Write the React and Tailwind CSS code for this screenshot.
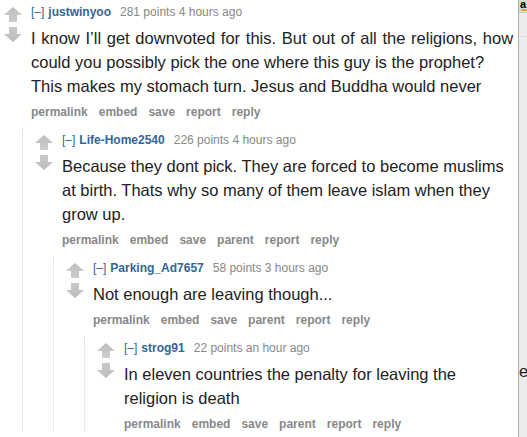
import React from "react";

const Arrow = ({ down }) => (
  <svg width="18" height="15" viewBox="0 0 18 15" className="block">
    <defs>
      <linearGradient id={down ? "gd" : "gu"} x1="0" y1="0" x2="0" y2="1">
        <stop offset="0" stopColor={down ? "#c8c8c8" : "#bdbdbd"} />
        <stop offset="1" stopColor={down ? "#bdbdbd" : "#cdcdcd"} />
      </linearGradient>
    </defs>
    <polygon
      points={down ? "9,15 18,7 13,7 13,0 5,0 5,7 0,7" : "9,0 18,8 13,8 13,15 5,15 5,8 0,8"}
      fill={`url(#${down ? "gd" : "gu"})`}
    />
  </svg>
);

function Comment({ c, first }) {
  return (
    <div className={first ? "pl-[4px] pt-[4px]" : "pl-[12px] pt-[4px]"}>
      <div className="flex">
        <div className="flex flex-col w-[18px] shrink-0 mt-[3px] gap-[5px]">
          <Arrow />
          <Arrow down />
        </div>
        <div className="ml-[9px] flex-1 min-w-0">
          <div className="text-[12px] leading-[16px] whitespace-nowrap">
            <span className="text-[#336699]">[–]</span>
            <span className="ml-[4px] font-bold text-[#336699]">{c.user}</span>
            <span className="ml-[9px] text-[#888888]">{c.meta}</span>
          </div>
          <div className="mt-[6px] text-[16.5px] leading-[24px] text-[#222222]">
            {c.lines.map((l, i) => (
              <div key={i} className={first && i === 0 ? "whitespace-nowrap [word-spacing:1.1px]" : "whitespace-nowrap"}>
                {l}
              </div>
            ))}
          </div>
          <div className="mt-[6px] flex gap-[11px] text-[12px] leading-[16px] font-bold text-[#888888]">
            {c.buttons.map((b) => (
              <span key={b}>{b}</span>
            ))}
          </div>
        </div>
      </div>
      {c.child && (
        <div className="mt-[8px] ml-[18px] border-l border-dotted border-[#d4d4ee]">
          <Comment c={c.child} />
        </div>
      )}
    </div>
  );
}

const btn = ["permalink", "embed", "save", "parent", "report", "reply"];

const data = {
  user: "justwinyoo",
  meta: "281 points 4 hours ago",
  lines: [
    "I know I’ll get downvoted for this. But out of all the religions, how",
    "could you possibly pick the one where this guy is the prophet?",
    "This makes my stomach turn. Jesus and Buddha would never",
  ],
  buttons: ["permalink", "embed", "save", "report", "reply"],
  child: {
    user: "Life-Home2540",
    meta: "226 points 4 hours ago",
    lines: [
      "Because they dont pick. They are forced to become muslims",
      "at birth. Thats why so many of them leave islam when they",
      "grow up.",
    ],
    buttons: btn,
    child: {
      user: "Parking_Ad7657",
      meta: "58 points 3 hours ago",
      lines: ["Not enough are leaving though..."],
      buttons: btn,
      child: {
        user: "strog91",
        meta: "22 points an hour ago",
        lines: ["In eleven countries the penalty for leaving the", "religion is death"],
        buttons: btn,
      },
    },
  },
};

export default function App() {
  return (
    <div
      className="w-[527px] h-[437px] overflow-hidden bg-white flex"
      style={{ fontFamily: '"Liberation Sans", Arial, sans-serif' }}
    >
      <div className="w-[518px] shrink-0 overflow-hidden">
        <Comment c={data} first />
      </div>
      <div className="flex-1 border-l border-[#b0b0b0] bg-[#ececec] flex flex-col overflow-hidden">
        <div className="h-[13px] bg-[#cfe2c6] border-b border-[#c0d4b8] relative">
          <span className="absolute left-[1px] top-[-3px] text-[11px] font-bold text-black leading-[14px]">a</span>
          <span className="absolute left-[2px] top-[9px] w-[6px] h-[2px] bg-[#e8a33a] rounded-full"></span>
        </div>
        <div className="h-[24px] border-b border-[#dcdcdc]"></div>
        <div className="mt-[322px] text-[16.5px] leading-[24px] text-[#222222] whitespace-nowrap">e</div>
      </div>
    </div>
  );
}
